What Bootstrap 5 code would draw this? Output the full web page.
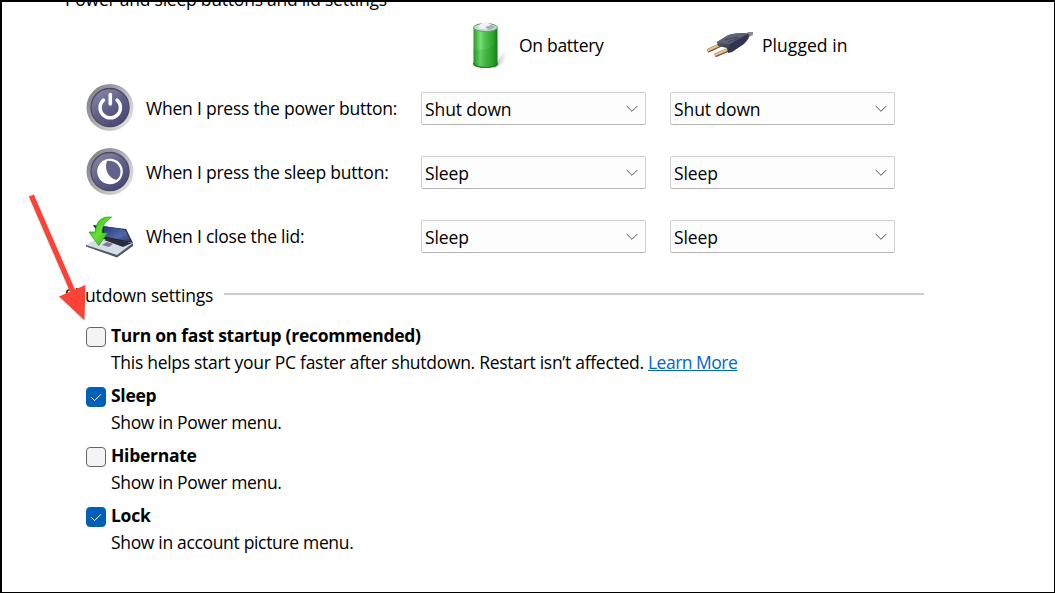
<!DOCTYPE html>
<html lang="en">
<head>
    <meta charset="UTF-8">
    <meta name="viewport" content="width=device-width, initial-scale=1.0">
    <title>Power Options</title>
    <!-- Bootstrap CSS -->
    <link href="https://cdn.jsdelivr.net/npm/bootstrap@5.3.3/dist/css/bootstrap.min.css" rel="stylesheet">
    <!-- Custom CSS -->
    <style>
        body {
            background-color: #fff;
            color: #000;
            font-family: "Open Sans", "Noto Sans", sans-serif;
            font-size: 17.5px;
            line-height: 24px;
            letter-spacing: -0.1px;
        }
        .options-page {
            height: 593px;
            border: solid #000;
            border-width: 2px 1px 1px 2px;
            padding-left: 63px;
        }
        .section-title {
            font-size: 17.5px;
            line-height: 24px;
            font-weight: 400;
            letter-spacing: -0.16px;
        }
        .title-top {
            margin-top: -15px;
            letter-spacing: -0.23px;
        }
        .settings-grid {
            padding-left: 21px;
        }
        .setting-line {
            display: grid;
            grid-template-columns: 60px 275px 249px 225px;
            align-items: center;
            height: 63px;
            margin-bottom: 1px;
        }
        .setting-label {
            padding-bottom: 1px;
            letter-spacing: -0.22px;
        }
        .source-line {
            height: 66px;
            margin-bottom: 0;
            padding-top: 2px;
        }
        .source-battery {
            grid-column: 3;
            padding-left: 45px;
            letter-spacing: -0.3px;
        }
        .source-plug {
            padding-left: 33px;
            letter-spacing: 0.05px;
        }
        .row-icon {
            margin-bottom: 2px;
        }
        .form-select {
            width: 225px;
            height: 33px;
            padding: 1px 24px 0 3px;
            font-size: 17.5px;
            line-height: 24px;
            letter-spacing: inherit;
            color: #000;
            background-color: #fdfdfd;
            background-image: url("data:image/svg+xml,%3csvg xmlns='http://www.w3.org/2000/svg' viewBox='0 0 12 8'%3e%3cpath fill='none' stroke='%23555' stroke-width='1' d='M.7 1 6 6.3 11.3 1'/%3e%3c/svg%3e");
            background-size: 12px 8px;
            background-position: right 7px center;
            border: 1px solid #d0d0d0;
            border-bottom-color: #b8b8b8;
            border-radius: 2px;
        }
        .shutdown-title {
            margin-top: 15px;
        }
        .title-rule {
            width: 700px;
            height: 2px;
            margin: 0 0 3px 11px;
            background-color: #ccc;
        }
        .shutdown-list {
            padding: 16px 0 0 21px;
        }
        .form-check {
            min-height: 60px;
            margin: 0;
            padding-left: 25px;
        }
        .form-check .form-check-input {
            width: 20px;
            height: 20px;
            margin: 4px 0 0 -25px;
            border: 1px solid #666;
            border-radius: 4px;
            background-color: #f3f3f3;
        }
        .form-check .form-check-input:checked {
            background-color: #005fb8;
            border-color: #005fb8;
            background-image: url("data:image/svg+xml,%3csvg xmlns='http://www.w3.org/2000/svg' viewBox='0 0 18 18'%3e%3cpath fill='none' stroke='%23fff' stroke-width='1' d='m4.300 9.300 3.300 3.300 6.300-6.300'/%3e%3c/svg%3e");
        }
        .form-check-label {
            display: block;
            font-weight: 700;
            letter-spacing: -0.27px;
        }
        .check-note {
            padding-top: 3px;
            letter-spacing: -0.33px;
        }
        .startup-note {
            letter-spacing: -0.29px;
        }
        .learn-link {
            color: #0066cc;
            letter-spacing: -0.5px;
        }
        .pointer-arrow {
            position: absolute;
            left: 0;
            top: 0;
            pointer-events: none;
        }
    </style>
</head>
<body>
    <main class="options-page position-relative overflow-hidden">
        <h2 class="section-title title-top mb-0">Power and sleep buttons and lid settings</h2>

        <!-- Buttons and lid -->
        <section class="settings-grid">
            <div class="setting-line source-line">
                <div class="source-battery d-flex align-items-center">
                    <svg width="53" height="52" viewBox="0 0 53 52">
                        <defs>
                            <linearGradient id="cell" x1="0" x2="1">
                                <stop offset="0" stop-color="#239a24"/>
                                <stop offset=".28" stop-color="#7bdc78"/>
                                <stop offset=".5" stop-color="#50bd4c"/>
                                <stop offset=".8" stop-color="#2fa52d"/>
                                <stop offset="1" stop-color="#127d18"/>
                            </linearGradient>
                            <linearGradient id="cellShade" x1="0" x2="1">
                                <stop offset="0" stop-color="#888" stop-opacity=".7"/>
                                <stop offset="1" stop-color="#bbb" stop-opacity="0"/>
                            </linearGradient>
                        </defs>
                        <path d="M28 46 39 32q3 0 2 5-2 8-13 12Z" fill="url(#cellShade)"/>
                        <path d="M7.500 8v37c0 5 24 5 24 0V8Z" fill="url(#cell)"/>
                        <path d="M7.500 44c0 6 24 6 24 0" fill="none" stroke="#16821b" stroke-width="1.200"/>
                        <path d="M7.500 30q13 4 24-7v22c0 5-24 5-24 0Z" fill="#0c8c17" opacity=".18"/>
                        <ellipse cx="19.500" cy="8.500" rx="12" ry="4" fill="#d0d0dc" stroke="#54a95a"/>
                        <path d="M12 8c2-6 13-6 14 0 0 3-14 3-14 0Z" fill="#f1f1f6"/>
                        <path d="m19 8 6-2 4 2-6 3Z" fill="#aaaac2"/>
                    </svg>
                    <span>On battery</span>
                </div>
                <div class="source-plug d-flex align-items-center">
                    <svg width="59" height="40" viewBox="0 0 59 40">
                        <defs>
                            <linearGradient id="plugBody" x1="0" y1="0" x2=".5" y2="1">
                                <stop offset="0" stop-color="#77798d"/>
                                <stop offset=".55" stop-color="#484b62"/>
                                <stop offset="1" stop-color="#222439"/>
                            </linearGradient>
                        </defs>
                        <path d="m40 11 5-4 5 0v3l-6 3Z" fill="#8b8f90"/>
                        <path d="m4.500 26 14-6.500" stroke="#7b512b" stroke-width="4"/>
                        <path d="m4.500 25.500 14-6.500" stroke="#edc494" stroke-width="2.300"/>
                        <path d="m12 30.500 15-6.500" stroke="#7b512b" stroke-width="4"/>
                        <path d="m12 30 15-6.500" stroke="#edc494" stroke-width="2.300"/>
                        <path d="m14 17 11-7c6-2 17-3 21-1 1 3-1 6-5 10l-12 8-4 1-1-5-9-2Z" fill="url(#plugBody)"/>
                        <path d="m14 17 12-7c6-2 13-2 17-1L27 19Z" fill="#5f6278"/>
                        <path d="m27 19 18-10c1 3-1 6-5 10L28 27Z" fill="#333550"/>
                        <path d="m22 15 12-3m-9 5 11-4" stroke="#424456" stroke-width="1"/>
                    </svg>
                    <span>Plugged in</span>
                </div>
            </div>

            <div class="setting-line">
                <svg class="row-icon" width="48" height="47" viewBox="0 0 48 47">
                    <defs>
                        <linearGradient id="ring" x1="0" y1="0" x2="1" y2=".7">
                            <stop offset="0" stop-color="#77777b"/>
                            <stop offset=".5" stop-color="#a8a8ab"/>
                            <stop offset="1" stop-color="#e0e0e2"/>
                        </linearGradient>
                        <linearGradient id="disc" x1=".1" y1="0" x2=".8" y2="1">
                            <stop offset="0" stop-color="#8b8ca8"/>
                            <stop offset=".5" stop-color="#60618a"/>
                            <stop offset="1" stop-color="#454572"/>
                        </linearGradient>
                    </defs>
                    <circle cx="24" cy="23.500" r="23.500" fill="url(#ring)"/>
                    <circle cx="24" cy="23.500" r="19" fill="url(#disc)" stroke="#494b62" stroke-width="1.300"/>
                    <path d="M17.500 16a10.200 10.200 0 1 0 13.500 0" fill="none" stroke="#fff" stroke-width="3.400" stroke-linecap="round"/>
                    <path d="M24.300 10.500V20" stroke="#fff" stroke-width="3.600" stroke-linecap="round"/>
                </svg>
                <span class="setting-label">When I press the power button:</span>
                <select class="form-select" aria-label="Power button on battery"><option>Shut down</option></select>
                <select class="form-select" aria-label="Power button plugged in"><option>Shut down</option></select>
            </div>

            <div class="setting-line">
                <svg class="row-icon" width="48" height="47" viewBox="0 0 48 47">
                    <circle cx="24" cy="23.500" r="23.500" fill="url(#ring)"/>
                    <circle cx="24" cy="23.500" r="19" fill="url(#disc)" stroke="#494b62" stroke-width="1.300"/>
                    <circle cx="24" cy="23.500" r="12.800" fill="#fff"/>
                    <path d="M21 13c-3 8 1 17 9.500 19 3-2 4-5 4-8.500C34.500 17 28 12 21 13Z" fill="#62638a"/>
                </svg>
                <span class="setting-label">When I press the sleep button:</span>
                <select class="form-select" aria-label="Sleep button on battery"><option>Sleep</option></select>
                <select class="form-select" aria-label="Sleep button plugged in"><option>Sleep</option></select>
            </div>

            <div class="setting-line">
                <svg class="row-icon" width="48" height="47" viewBox="0 0 48 47">
                    <defs>
                        <linearGradient id="screen" x1="0" y1="0" x2="1" y2="1">
                            <stop offset="0" stop-color="#29377d"/>
                            <stop offset=".6" stop-color="#5268ac"/>
                            <stop offset="1" stop-color="#29366f"/>
                        </linearGradient>
                        <linearGradient id="down" x1="0" y1="0" x2="1" y2="1">
                            <stop offset="0" stop-color="#1ca60e"/>
                            <stop offset=".5" stop-color="#65e534"/>
                            <stop offset="1" stop-color="#27a614"/>
                        </linearGradient>
                    </defs>
                    <path d="m7 13 33 4 7 14-31-4Z" fill="#1f2234"/>
                    <path d="m18 14 21 3.700 6.500 12L18 24.500Z" fill="url(#screen)"/>
                    <path d="m0 33 12-7 35 5-16 12.500Z" fill="#d5dce6"/>
                    <path d="m0 33 31 10 16-12v3L31 45.500 0 34.500Z" fill="#505664"/>
                    <path d="m18 28 4-2 24 5-9 4Z" fill="#292d3b"/>
                    <path d="m16 33 5-3 6 2-4 3Z" fill="#777e8a"/>
                    <path d="M25.700 5.200C16 4 10 9 9.300 20H3l9.700 13.500L21.500 21H16c0-7 3.500-12 9.700-15.800Z" fill="url(#down)" stroke="#239614" stroke-width=".7"/>
                </svg>
                <span class="setting-label">When I close the lid:</span>
                <select class="form-select" aria-label="Lid on battery"><option>Sleep</option></select>
                <select class="form-select" aria-label="Lid plugged in"><option>Sleep</option></select>
            </div>
        </section>

        <!-- Shutdown settings -->
        <div class="shutdown-title d-flex align-items-center">
            <h2 class="section-title mb-0">Shutdown settings</h2>
            <div class="title-rule"></div>
        </div>
        <section class="shutdown-list">
            <div class="form-check">
                <input class="form-check-input" type="checkbox" id="fastStartup">
                <label class="form-check-label" for="fastStartup">Turn on fast startup (recommended)</label>
                <div class="check-note startup-note">This helps start your PC faster after shutdown. Restart isn’t affected. <a class="learn-link" href="#">Learn More</a></div>
            </div>
            <div class="form-check">
                <input class="form-check-input" type="checkbox" id="sleep" checked>
                <label class="form-check-label" for="sleep">Sleep</label>
                <div class="check-note">Show in Power menu.</div>
            </div>
            <div class="form-check">
                <input class="form-check-input" type="checkbox" id="hibernate">
                <label class="form-check-label" for="hibernate">Hibernate</label>
                <div class="check-note">Show in Power menu.</div>
            </div>
            <div class="form-check">
                <input class="form-check-input" type="checkbox" id="lock" checked>
                <label class="form-check-label" for="lock">Lock</label>
                <div class="check-note">Show in account picture menu.</div>
            </div>
        </section>
    </main>

    <!-- Arrow over the page -->
    <svg class="pointer-arrow" width="120" height="330" viewBox="0 0 120 330">
        <path d="m31.300 195.500 42 97" stroke="#ff4238" stroke-width="5.500"/>
        <path d="m59 296.500 26.500-11.500-1 35.500Z" fill="#ff4238"/>
    </svg>

    <!-- Bootstrap JS -->
    <script src="https://cdn.jsdelivr.net/npm/bootstrap@5.3.3/dist/js/bootstrap.bundle.min.js"></script>
</body>
</html>
